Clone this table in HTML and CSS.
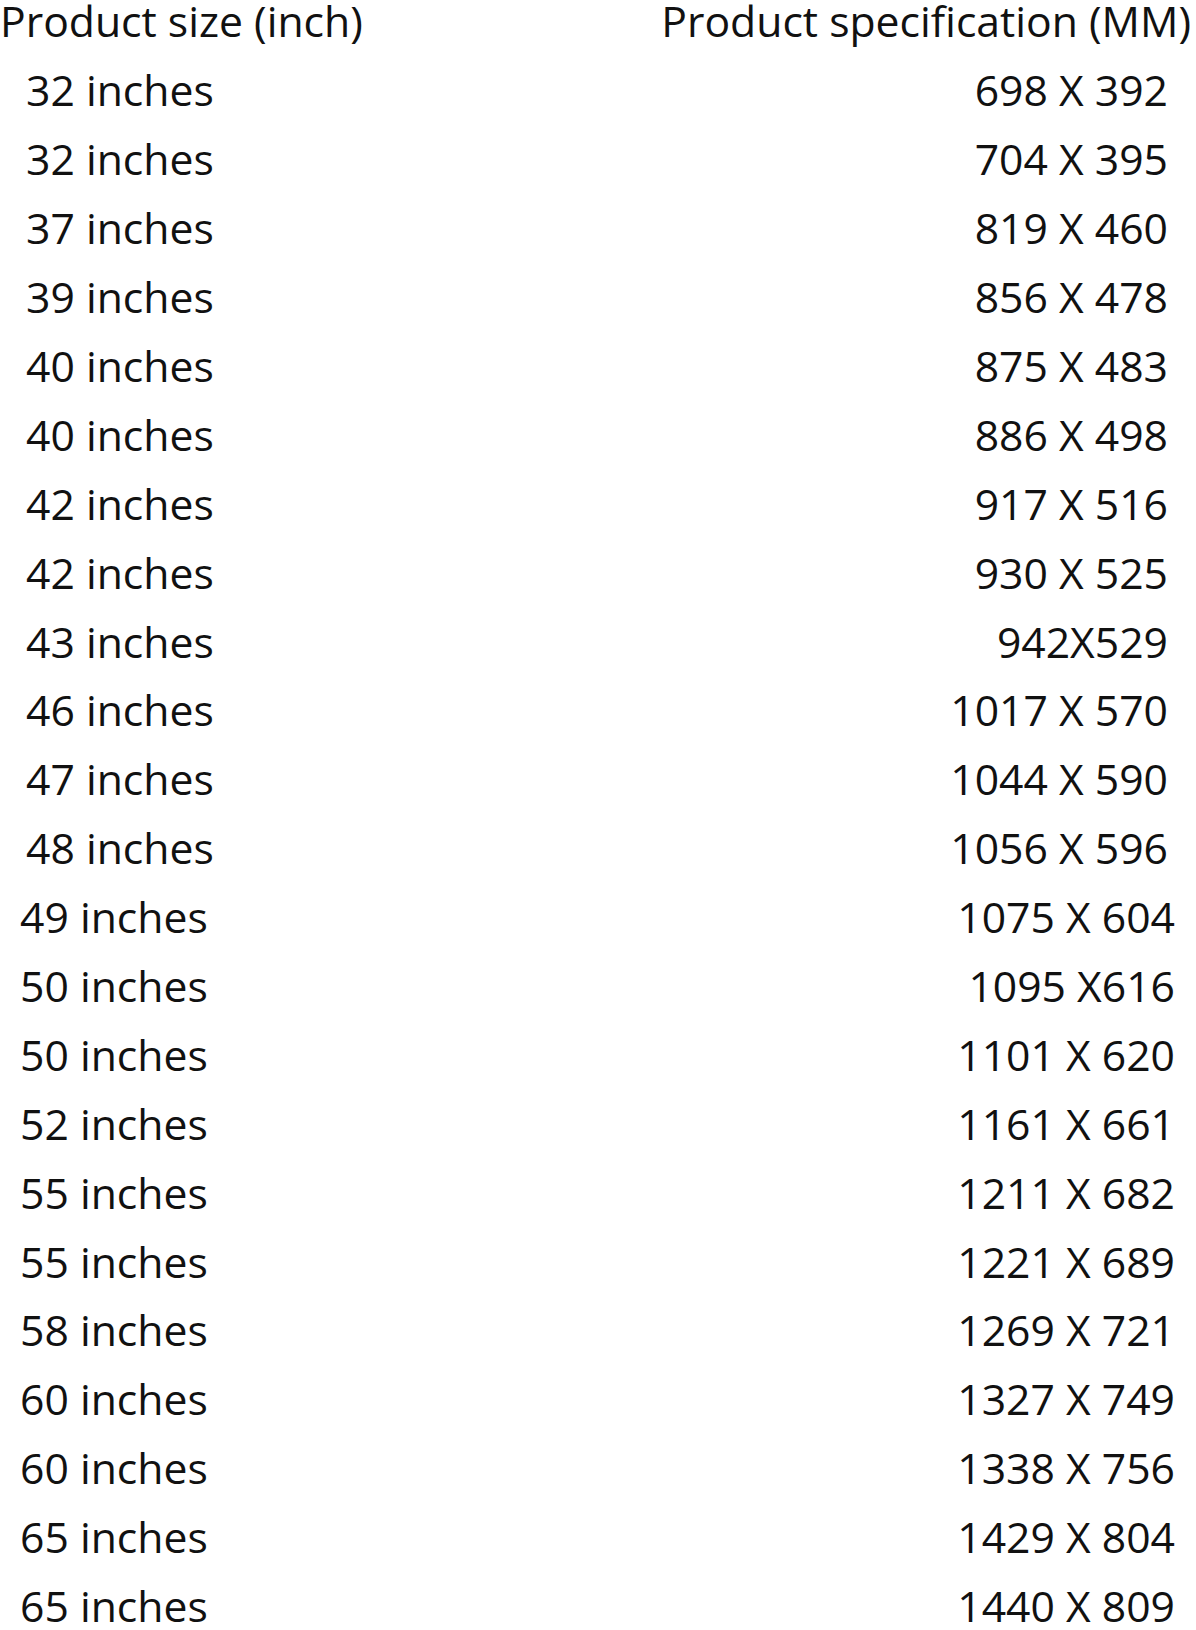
FILE: index.html
```html
<!DOCTYPE html>
<html lang="en">
<head>
<meta charset="utf-8">
<title>Product size table</title>
<link rel="stylesheet" href="styles.css">
</head>
<body>
<div class="sheet">
  <div class="row head"><span>Product size (inch)</span><span>Product specification (MM)</span></div>
  <div class="row"><span>32 inches</span><span>698 X 392</span></div>
  <div class="row"><span>32 inches</span><span>704 X 395</span></div>
  <div class="row"><span>37 inches</span><span>819 X 460</span></div>
  <div class="row"><span>39 inches</span><span>856 X 478</span></div>
  <div class="row"><span>40 inches</span><span>875 X 483</span></div>
  <div class="row"><span>40 inches</span><span>886 X 498</span></div>
  <div class="row"><span>42 inches</span><span>917 X 516</span></div>
  <div class="row"><span>42 inches</span><span>930 X 525</span></div>
  <div class="row"><span>43 inches</span><span>942X529</span></div>
  <div class="row"><span>46 inches</span><span>1017 X 570</span></div>
  <div class="row"><span>47 inches</span><span>1044 X 590</span></div>
  <div class="row"><span>48 inches</span><span>1056 X 596</span></div>
  <div class="row wide"><span>49 inches</span><span>1075 X 604</span></div>
  <div class="row wide"><span>50 inches</span><span>1095 X616</span></div>
  <div class="row wide"><span>50 inches</span><span>1101 X 620</span></div>
  <div class="row wide"><span>52 inches</span><span>1161 X 661</span></div>
  <div class="row wide"><span>55 inches</span><span>1211 X 682</span></div>
  <div class="row wide"><span>55 inches</span><span>1221 X 689</span></div>
  <div class="row wide"><span>58 inches</span><span>1269 X 721</span></div>
  <div class="row wide"><span>60 inches</span><span>1327 X 749</span></div>
  <div class="row wide"><span>60 inches</span><span>1338 X 756</span></div>
  <div class="row wide"><span>65 inches</span><span>1429 X 804</span></div>
  <div class="row wide"><span>65 inches</span><span>1440 X 809</span></div>
</div>
</body>
</html>
```
FILE: styles.css
```css
html, body {
  margin: 0;
  padding: 0;
  background: #ffffff;
}
.sheet {
  width: 1196px;
  height: 1630px;
  overflow: hidden;
  font-family: "Open Sans", "Noto Sans", sans-serif;
  font-size: 42.7px;
  color: #111111;
  display: flex;
  flex-direction: column;
}
.row {
  display: flex;
  justify-content: space-between;
  flex: 0 0 68.9px;
  height: 68.9px;
  line-height: 68.9px;
  padding: 0 28px 0 26px;
  white-space: nowrap;
}
.row.head {
  flex-basis: 56.4px;
  height: 56.4px;
  line-height: 42px;
  padding: 0 5px 0 0;
}
.row.wide {
  padding: 0 21px 0 20px;
}
```
